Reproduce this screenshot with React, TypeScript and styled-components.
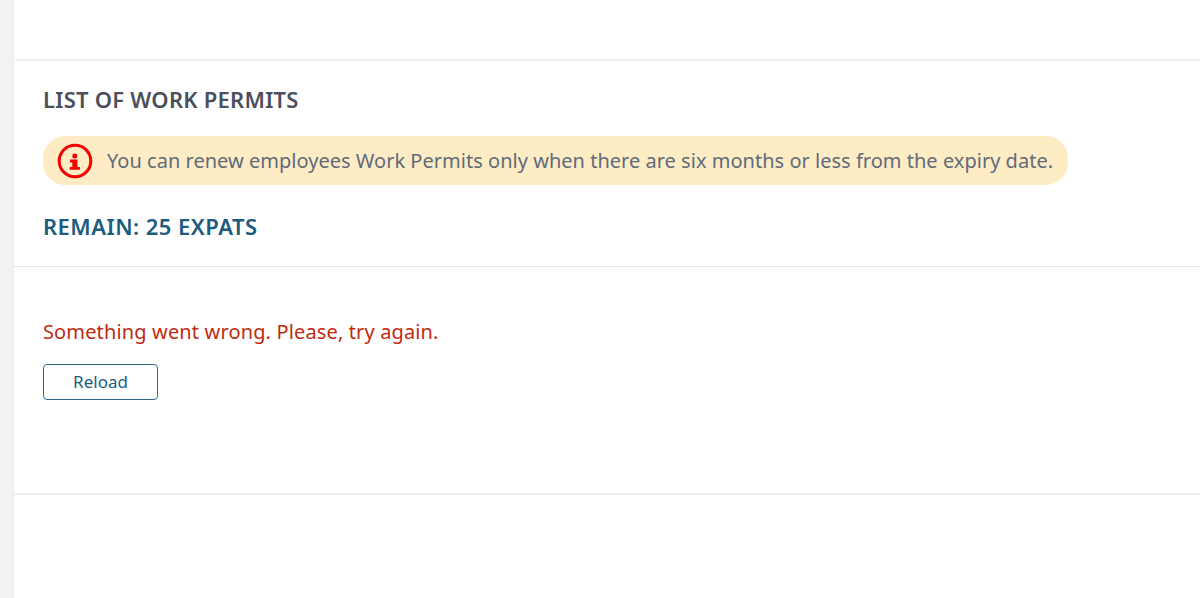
import React from "react";
import styled, { createGlobalStyle } from "styled-components";

const GlobalStyle = createGlobalStyle`
  html, body {
    margin: 0;
    padding: 0;
    height: 100%;
    overflow: hidden;
    background: #fff;
    font-family: "Noto Sans", "Open Sans", sans-serif;
  }
`;

const Page = styled.div`
  height: 598px;
  display: flex;
  background: #f1f3f3;
`;

const Content = styled.main`
  flex: 1;
  min-width: 0;
  margin-left: 14px;
  display: flex;
  flex-direction: column;
  background: #fff;
  box-shadow: -1px 0 1px #e8e9e9;
`;

const TopSpace = styled.div`
  height: 59px;
  flex: none;
`;

const Card = styled.section`
  border-top: 2px solid #eeeff0;
  border-top-left-radius: 4px;
  border-bottom: 2px solid #eeeff0;
`;

const Header = styled.header`
  height: 206px;
  padding: 26px 29px 0;
  box-sizing: border-box;
  border-bottom: 1px solid #e6e7e8;
`;

const Title = styled.h2`
  margin: 0;
  font-size: 22px;
  line-height: 24px;
  font-weight: 600;
  letter-spacing: 0.25px;
  color: #4a4f5a;
`;

const Notice = styled.div`
  display: flex;
  align-items: center;
  gap: 14px;
  width: fit-content;
  height: 49px;
  margin-top: 25px;
  padding: 0 15px 0 14px;
  border-radius: 22px;
  background: #feecc5;
  color: #5f6b7a;
  font-size: 20px;
  letter-spacing: 0.02px;
`;

const Remain = styled.h3`
  margin: 29px 0 0;
  font-size: 22px;
  line-height: 24px;
  font-weight: 600;
  letter-spacing: 0.47px;
  color: #1d5b7f;
`;

const Body = styled.div`
  height: 226px;
  padding: 53px 29px 0;
  box-sizing: border-box;
`;

const ErrorText = styled.p`
  margin: 0;
  font-size: 20px;
  line-height: 24px;
  letter-spacing: 0.14px;
  color: #bf2b0f;
`;

const ReloadButton = styled.button`
  display: block;
  width: 115px;
  height: 36px;
  margin-top: 20px;
  padding: 0 0 2px;
  border: 1px solid #2f6a8c;
  border-radius: 4px;
  background: #fff;
  color: #1d5b7f;
  font: 400 17px "Noto Sans", "Open Sans", sans-serif;
`;

const InfoIcon = () => (
  <svg width="36" height="36" viewBox="0 0 36 36" aria-hidden="true">
    <circle cx="18" cy="18" r="15.8" fill="none" stroke="#f40000" strokeWidth="3" />
    <circle cx="17.8" cy="13" r="2.5" fill="#f40000" />
    <path d="M13 16.6h7.4V24h2.5v2.8H12.7V24h2.6v-4.6H13z" fill="#f40000" />
  </svg>
);

const App = () => {
  return (
    <Page>
      <GlobalStyle />
      <Content>
        <TopSpace />
        <Card>
          <Header>
            <Title>LIST OF WORK PERMITS</Title>
            <Notice>
              <InfoIcon />
              You can renew employees Work Permits only when there are six months or less from the expiry date.
            </Notice>
            <Remain>REMAIN: 25 EXPATS</Remain>
          </Header>
          <Body>
            <ErrorText>Something went wrong. Please, try again.</ErrorText>
            <ReloadButton>Reload</ReloadButton>
          </Body>
        </Card>
      </Content>
    </Page>
  );
};

export default App;
